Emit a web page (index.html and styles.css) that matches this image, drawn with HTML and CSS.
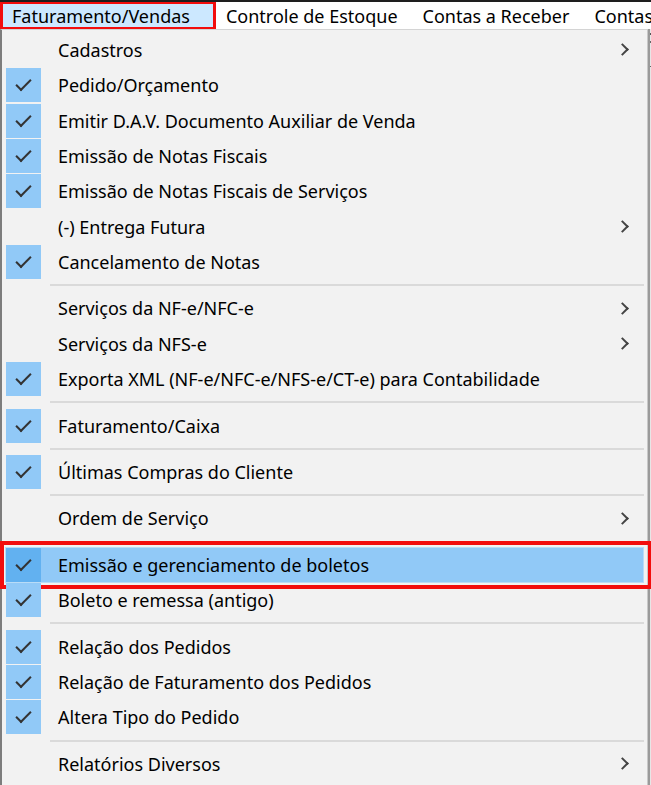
FILE: index.html
```html
<!DOCTYPE html>
<html lang="pt-BR">
<head>
  <meta charset="UTF-8" />
  <meta name="viewport" content="width=device-width, initial-scale=1" />
  <title>Faturamento/Vendas</title>
  <link rel="stylesheet" href="styles.css">
</head>
<body>
  <div class="topline"></div>

  <!-- Menu bar -->
  <nav class="menubar">
    <span class="bar-item active">Faturamento/Vendas</span>
    <span class="bar-item">Controle de Estoque</span>
    <span class="bar-item">Contas a Receber</span>
    <span class="bar-item">Contas a Pagar</span>
  </nav>

  <div class="screen">
    <!-- Dropdown -->
    <div class="menu">
      <div class="item"><span class="check"></span><span class="label">Cadastros</span><span class="arrow"></span></div>
      <div class="item"><span class="check on"></span><span class="label">Pedido/Orçamento</span></div>
      <div class="item"><span class="check on"></span><span class="label">Emitir D.A.V. Documento Auxiliar de Venda</span></div>
      <div class="item"><span class="check on"></span><span class="label">Emissão de Notas Fiscais</span></div>
      <div class="item"><span class="check on"></span><span class="label">Emissão de Notas Fiscais de Serviços</span></div>
      <div class="item"><span class="check"></span><span class="label">(-) Entrega Futura</span><span class="arrow"></span></div>
      <div class="item"><span class="check on"></span><span class="label">Cancelamento de Notas</span></div>
      <div class="sep"></div>
      <div class="item"><span class="check"></span><span class="label">Serviços da NF-e/NFC-e</span><span class="arrow"></span></div>
      <div class="item"><span class="check"></span><span class="label">Serviços da NFS-e</span><span class="arrow"></span></div>
      <div class="item"><span class="check on"></span><span class="label">Exporta XML (NF-e/NFC-e/NFS-e/CT-e) para Contabilidade</span></div>
      <div class="sep"></div>
      <div class="item"><span class="check on"></span><span class="label">Faturamento/Caixa</span></div>
      <div class="sep"></div>
      <div class="item"><span class="check on"></span><span class="label">Últimas Compras do Cliente</span></div>
      <div class="sep"></div>
      <div class="item"><span class="check"></span><span class="label">Ordem de Serviço</span><span class="arrow"></span></div>
      <div class="sep"></div>
      <div class="item hover marked"><span class="check on"></span><span class="label">Emissão e gerenciamento de boletos</span></div>
      <div class="item"><span class="check on"></span><span class="label">Boleto e remessa (antigo)</span></div>
      <div class="sep"></div>
      <div class="item"><span class="check on"></span><span class="label">Relação dos Pedidos</span></div>
      <div class="item"><span class="check on"></span><span class="label">Relação de Faturamento dos Pedidos</span></div>
      <div class="item"><span class="check on"></span><span class="label">Altera Tipo do Pedido</span></div>
      <div class="sep"></div>
      <div class="item"><span class="check"></span><span class="label">Relatórios Diversos</span><span class="arrow"></span></div>
    </div>
    <div class="behind"></div>
  </div>
</body>
</html>
```

FILE: styles.css
```css
/* Global */
body {
  margin: 0;
  background-color: #f0f0f0;
  font-family: "Noto Sans", "Open Sans", sans-serif;
  font-size: 18px;
  color: #000;
  overflow: hidden;
  height: 785px;
}

.topline {
  height: 2px;
  background-color: #1e1e1e;
}

/* Menu bar */
.menubar {
  display: flex;
  height: 27px;
  background-color: #fff;
  white-space: nowrap;
  overflow: hidden;
}
.bar-item {
  display: flex;
  align-items: center;
  padding: 0 8px;
  margin-left: 9px;
}
.bar-item.active {
  margin-left: 0;
  padding: 0 23px 0 9px;
  background-color: #cce8ff;
  border: 3px solid #f20d0d;
  border-top-width: 2px;
  border-bottom-width: 2px;
}
.bar-item.active + .bar-item {
  margin-left: 0;
  padding-left: 10px;
}

/* Dropdown */
.screen {
  display: flex;
  height: 756px;
}
.menu {
  width: 639px;
  flex-shrink: 0;
  background-color: #f2f2f2;
  border-left: 2px solid #7d7d7d;
  border-top: 1px solid #d4d4d4;
  border-right: 1px solid #c8c8c8;
  padding: 2.33px 3px 0 3px;
}
.behind {
  flex: 1;
  background-color: #e6e6e6;
  border-left: 2px solid #9a9a9a;
  background-image: linear-gradient(#555, #555), linear-gradient(#666, #666), linear-gradient(#666, #666);
  background-size: 3px 2px, 3px 2px, 3px 1px;
  background-position: 0 4px, 0 12px, 0 37px;
  background-repeat: no-repeat;
}

.item {
  display: flex;
  align-items: center;
  height: 35.33px;
  box-sizing: border-box;
  border: 1px solid transparent;
  position: relative;
}
.check {
  width: 35px;
  height: 34px;
  flex-shrink: 0;
  display: flex;
  align-items: center;
  justify-content: center;
}
.check.on {
  background-color: #91c9f7;
}
.check.on::before {
  content: "";
  width: 13px;
  height: 6px;
  border-left: 2px solid #333;
  border-bottom: 2px solid #333;
  transform: translate(0, -2px) rotate(-45deg);
}
.label {
  margin-left: 17px;
  white-space: nowrap;
}
.arrow {
  margin-left: auto;
  margin-right: 16px;
  width: 7px;
  height: 7px;
  border-top: 2px solid #444;
  border-right: 2px solid #444;
  transform: rotate(45deg);
}

.item.hover {
  background-color: #91c9f7;
  border-color: #b9dcf7;
}
.item.hover .check.on {
  background-color: #62b1f0;
}

/* Red annotation box */
.item.marked::after {
  content: "";
  position: absolute;
  top: -7px;
  bottom: -7px;
  left: -6px;
  right: -9px;
  border: 4px solid #f20d0d;
}

.sep {
  height: 11.14px;
  display: flex;
  align-items: center;
  padding-left: 45px;
}
.sep::before {
  content: "";
  flex: 1;
  height: 2px;
  background-color: #dadada;
}
```
